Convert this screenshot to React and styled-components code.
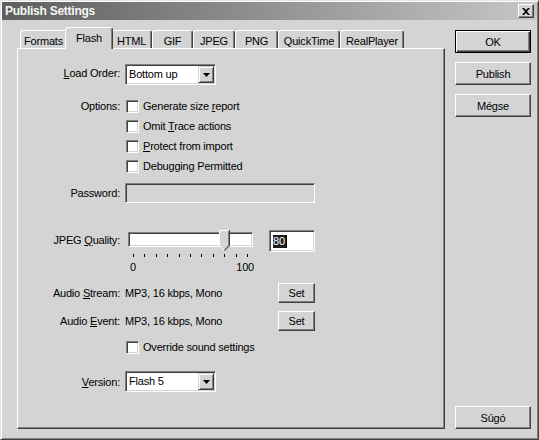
import React from "react";
import styled, { createGlobalStyle, css } from "styled-components";

const FACE = "#d4d4d4";

const GlobalStyle = createGlobalStyle`
  html, body {
    margin: 0;
    padding: 0;
    background: ${FACE};
  }
  body {
    font-family: "Liberation Sans", Arial, sans-serif;
    font-size: 11px;
    color: #000;
  }
`;

const raised = css`
  border: 1px solid;
  border-color: #fff #404040 #404040 #fff;
  box-shadow: inset -1px -1px #808080;
`;

const sunken = css`
  border: 1px solid;
  border-color: #808080 #fff #fff #808080;
  box-shadow: inset 1px 1px #404040, inset -1px -1px ${FACE};
`;

const Window = styled.div`
  box-sizing: border-box;
  width: 539px;
  height: 440px;
  padding: 1px;
  background: ${FACE};
  border: 1px solid;
  border-color: #e4e4e4 #404040 #404040 #e4e4e4;
  box-shadow: inset 1px 1px #fff, inset -1px -1px #808080;
  display: flex;
  flex-direction: column;
  letter-spacing: -0.2px;
`;

const TitleBar = styled.div`
  flex-shrink: 0;
  height: 18px;
  display: flex;
  align-items: center;
  justify-content: space-between;
  padding: 0 3px 0 3px;
  background: linear-gradient(to right, #5e5e5e, #c6c6c6);
  color: #f6f6f6;
  font-weight: bold;
  font-size: 12px;
  letter-spacing: -0.25px;
`;

const CloseButton = styled.div`
  box-sizing: border-box;
  width: 16px;
  height: 14px;
  background: ${FACE};
  display: flex;
  align-items: center;
  justify-content: center;
  ${raised};
`;

const Body = styled.div`
  flex: 1;
  display: flex;
  gap: 10px;
  padding: 7px 6px 9px 15px;
`;

const TabArea = styled.div`
  width: 428px;
  display: flex;
  flex-direction: column;
`;

const TabRow = styled.div`
  flex-shrink: 0;
  height: 21px;
  display: flex;
  align-items: flex-end;
  padding-left: 3px;
`;

const Tab = styled.div`
  box-sizing: border-box;
  position: relative;
  width: ${(p) => (p.$active ? p.$w + 4 : p.$w)}px;
  height: ${(p) => (p.$active ? 22 : 18)}px;
  margin: ${(p) => (p.$active ? "0 -2px -1px" : "0")};
  z-index: ${(p) => (p.$active ? 1 : 0)};
  padding-top: 2px;
  text-align: center;
  line-height: 16px;
  white-space: nowrap;
  background: ${FACE};
  border-top: 1px solid #fff;
  border-left: 1px solid #fff;
  border-right: 1px solid #404040;
  border-radius: 3px 3px 0 0;
  box-shadow: inset -1px 0 #808080;
`;

const Panel = styled.div`
  flex: 1;
  box-sizing: border-box;
  border: 1px solid;
  border-color: #fff #404040 #404040 #fff;
  box-shadow: inset -1px -1px #808080;
  display: flex;
  flex-direction: column;
`;

const Row = styled.div`
  display: flex;
  align-items: ${(p) => (p.$top ? "flex-start" : "center")};
  margin-top: ${(p) => p.$mt}px;
  min-height: ${(p) => p.$h || 20}px;
`;

const Label = styled.div`
  flex-shrink: 0;
  width: 102px;
  margin-right: 5px;
  text-align: right;
  white-space: nowrap;
  line-height: ${(p) => p.$lh || 14}px;
  padding-bottom: ${(p) => p.$raise || 0}px;
`;

const CheckList = styled.div`
  display: flex;
  flex-direction: column;
`;

const CheckRow = styled.div`
  height: 20px;
  display: flex;
  align-items: center;
  gap: 4px;
  padding-left: 1px;
  white-space: nowrap;
`;

const CheckBox = styled.span`
  box-sizing: border-box;
  width: 13px;
  height: 13px;
  background: #fff;
  ${sunken};
`;

const Select = styled.div`
  box-sizing: border-box;
  width: 91px;
  height: 21px;
  padding: 1px;
  background: #fff;
  display: flex;
  align-items: center;
  justify-content: space-between;
  ${sunken};
`;

const SelectText = styled.span`
  padding-left: 2px;
  line-height: 15px;
`;

const DropButton = styled.div`
  box-sizing: border-box;
  width: 16px;
  height: 17px;
  background: ${FACE};
  display: flex;
  align-items: center;
  justify-content: center;
  border: 1px solid;
  border-color: ${FACE} #404040 #404040 ${FACE};
  box-shadow: inset 1px 1px #fff, inset -1px -1px #808080;
`;

const TextField = styled.div`
  box-sizing: border-box;
  width: ${(p) => p.$w}px;
  height: ${(p) => p.$h}px;
  padding: 1px 1px 1px 3px;
  background: ${(p) => (p.$disabled ? FACE : "#fff")};
  display: flex;
  align-items: center;
  ${sunken};
`;

const Selection = styled.span`
  background: #1e1e1e;
  color: #fff;
  line-height: 13px;
  padding-right: 1px;
`;

const Caret = styled.span`
  width: 1px;
  height: 13px;
  background: #000;
`;

const SliderBlock = styled.div`
  margin-left: 3px;
  margin-right: 16px;
  width: 125px;
  display: flex;
  flex-direction: column;
`;

const Track = styled.div`
  position: relative;
  box-sizing: border-box;
  margin-top: 2px;
  height: 15px;
  background: #fff;
  ${sunken};
`;

const Thumb = styled.svg`
  position: absolute;
  top: -3px;
  display: block;
`;

const Ticks = styled.div`
  margin: 7px 0 0 5px;
  width: 115px;
  height: 4px;
  display: flex;
  justify-content: space-between;
`;

const Tick = styled.span`
  width: 1px;
  height: 3px;
  background: #000;
`;

const Scale = styled.div`
  margin-top: 3px;
  width: 126px;
  padding-left: 2px;
  box-sizing: border-box;
  display: flex;
  justify-content: space-between;
  line-height: 13px;
`;

const ControlArea = styled.div`
  width: 190px;
  display: flex;
  align-items: center;
  justify-content: space-between;
  white-space: nowrap;
`;

const ButtonColumn = styled.div`
  width: 76px;
  padding-top: 3px;
  display: flex;
  flex-direction: column;
  gap: 9px;
`;

const Button = styled.button`
  box-sizing: border-box;
  width: ${(p) => p.$w || 76}px;
  height: ${(p) => p.$h || 23}px;
  margin: 0;
  margin-top: ${(p) => (p.$bottom ? "auto" : "0")};
  padding: 0;
  font: inherit;
  letter-spacing: inherit;
  color: #000;
  background: ${FACE};
  display: flex;
  align-items: center;
  justify-content: center;
  ${raised};
  ${(p) =>
    p.$default &&
    css`
      border-color: #000;
      box-shadow: inset 1px 1px #fff, inset -1px -1px #404040,
        inset -2px -2px #808080;
    `}
`;

const tabs = [
  ["Formats", 47],
  ["Flash", 44],
  ["HTML", 41],
  ["GIF", 41],
  ["JPEG", 42],
  ["PNG", 43],
  ["QuickTime", 62],
  ["RealPlayer", 64],
];

const Arrow = () => (
  <svg width="7" height="4" viewBox="0 0 7 4">
    <polygon points="0,0 7,0 3.5,4" fill="#000" />
  </svg>
);

const Check = ({ children }) => (
  <CheckRow>
    <CheckBox />
    <span>{children}</span>
  </CheckRow>
);

const Dropdown = ({ value }) => (
  <Select>
    <SelectText>{value}</SelectText>
    <DropButton>
      <Arrow />
    </DropButton>
  </Select>
);

const Slider = ({ value }) => (
  <SliderBlock>
    <Track>
      <Thumb
        width="11"
        height="21"
        viewBox="0 0 11 21"
        style={{ left: 4 + value * 1.14 - 5.5 }}
      >
        <path d="M0 0 H11 V16 L5.5 21 L0 16 Z" fill={FACE} />
        <path d="M0.5 16 V0.5 H10" stroke="#fff" fill="none" />
        <path d="M0.5 15.5 L5.5 20.5" stroke="#fff" fill="none" />
        <path d="M10.5 0 V15.8 L5.5 20.8" stroke="#404040" fill="none" />
        <path d="M9.5 1 V15.4 L5.5 19.4" stroke="#808080" fill="none" />
      </Thumb>
    </Track>
    <Ticks>
      {Array.from({ length: 11 }, (_, i) => (
        <Tick key={i} />
      ))}
    </Ticks>
    <Scale>
      <span>0</span>
      <span>100</span>
    </Scale>
  </SliderBlock>
);

export default function App() {
  return (
    <>
      <GlobalStyle />
      <Window>
        <TitleBar>
          <span>Publish Settings</span>
          <CloseButton>
            <svg width="8" height="7" viewBox="0 0 8 7">
              <path
                d="M0 0 H2 L4 2 L6 0 H8 L5 3.5 L8 7 H6 L4 5 L2 7 H0 L3 3.5 Z"
                fill="#000"
              />
            </svg>
          </CloseButton>
        </TitleBar>
        <Body>
          <TabArea>
            <TabRow>
              {tabs.map(([name, w]) => (
                <Tab key={name} $w={w} $active={name === "Flash"}>
                  {name}
                </Tab>
              ))}
            </TabRow>
            <Panel>
              <Row $mt={15} $h={21}>
                <Label $raise={4}>
                  <u>L</u>oad Order:
                </Label>
                <Dropdown value="Bottom up" />
              </Row>
              <Row $mt={11} $top>
                <Label $lh={20}>Options:</Label>
                <CheckList>
                  <Check>
                    Generate size <u>r</u>eport
                  </Check>
                  <Check>
                    Omit <u>T</u>race actions
                  </Check>
                  <Check>
                    <u>P</u>rotect from import
                  </Check>
                  <Check>Debugging Permitted</Check>
                </CheckList>
              </Row>
              <Row $mt={7}>
                <Label>Password:</Label>
                <TextField $w={190} $h={20} $disabled />
              </Row>
              <Row $mt={27} $top>
                <Label $lh={20}>
                  JPEG <u>Q</u>uality:
                </Label>
                <Slider value={80} />
                <TextField $w={46} $h={22}>
                  <Selection>80</Selection>
                  <Caret />
                </TextField>
              </Row>
              <Row $mt={9}>
                <Label>
                  Audio <u>S</u>tream:
                </Label>
                <ControlArea>
                  <span>MP3, 16 kbps, Mono</span>
                  <Button $w={37} $h={20}>
                    Set
                  </Button>
                </ControlArea>
              </Row>
              <Row $mt={8}>
                <Label>
                  Audio <u>E</u>vent:
                </Label>
                <ControlArea>
                  <span>MP3, 16 kbps, Mono</span>
                  <Button $w={37} $h={20}>
                    Set
                  </Button>
                </ControlArea>
              </Row>
              <Row $mt={6}>
                <Label />
                <Check>Override sound settings</Check>
              </Row>
              <Row $mt={14} $h={21}>
                <Label>
                  <u>V</u>ersion:
                </Label>
                <Dropdown value="Flash 5" />
              </Row>
            </Panel>
          </TabArea>
          <ButtonColumn>
            <Button $default>OK</Button>
            <Button>Publish</Button>
            <Button>Mégse</Button>
            <Button $bottom>Súgó</Button>
          </ButtonColumn>
        </Body>
      </Window>
    </>
  );
}
